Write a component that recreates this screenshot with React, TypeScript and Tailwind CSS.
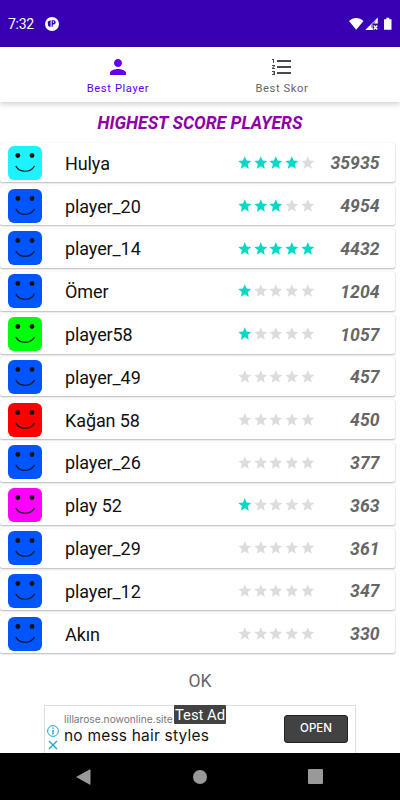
import { MdFormatListNumbered, MdPerson, MdStar } from 'react-icons/md'

interface Player {
  name: string
  color: string
  stars: number
  score: number
}

const players: Player[] = [
  { name: 'Hulya', color: 'text-[#1df3ff]', stars: 4, score: 35935 },
  { name: 'player_20', color: 'text-[#0055ff]', stars: 3, score: 4954 },
  { name: 'player_14', color: 'text-[#0055ff]', stars: 5, score: 4432 },
  { name: 'Ömer', color: 'text-[#0055ff]', stars: 1, score: 1204 },
  { name: 'player58', color: 'text-[#00ff0a]', stars: 1, score: 1057 },
  { name: 'player_49', color: 'text-[#0055ff]', stars: 0, score: 457 },
  { name: 'Kağan 58', color: 'text-[#ff0000]', stars: 0, score: 450 },
  { name: 'player_26', color: 'text-[#0055ff]', stars: 0, score: 377 },
  { name: 'play 52', color: 'text-[#ff00ff]', stars: 1, score: 363 },
  { name: 'player_29', color: 'text-[#0055ff]', stars: 0, score: 361 },
  { name: 'player_12', color: 'text-[#0055ff]', stars: 0, score: 347 },
  { name: 'Akın', color: 'text-[#0055ff]', stars: 0, score: 330 }
]

function StatusBar() {
  return (
    <header className="flex h-[47px] shrink-0 items-center bg-[#3700b3] pl-2 pr-[7px] text-white">
      <span className="text-[14px] leading-5 tracking-[-0.3px]">7:32</span>
      <svg viewBox="0 0 14 14" className="ml-[11px] h-[14px] w-[14px]">
        <circle cx="7" cy="7" r="7" fill="#fff" />
        <path d="M2.800 5Q3 3.600 5.600 3.200v6.600H4.200Q2.800 9 2.800 7z" fill="#3700b3" />
        <path d="M6.600 3.200h2.400a2.200 2.200 0 0 1 0 4.300H7.800v2.300H6.600z" fill="#3700b3" />
        <circle cx="8.400" cy="5" r=".8" fill="#fff" />
      </svg>
      <svg viewBox="0 0 46 16" className="ml-auto h-4 w-[46px]" fill="#fff">
        <path d="M2 5C6 1.100 12.500 1.100 16.500 5L9.200 13.800z" />
        <path d="M30.800 1.500v6h-5v6.500H18.200z" />
        <path d="M25 11.800V8.500l3.500-3.300" fill="none" stroke="#3700b3" strokeWidth=".9" />
        <path d="M26.700 9.500l3.600 4M30.300 9.500l-3.600 4" fill="none" stroke="#fff" strokeWidth="1.300" />
        <path d="M37 3.200h2.300V1.700h3v1.500h2.200v10.600H37z" />
      </svg>
    </header>
  )
}

function Tabs() {
  return (
    <nav className="z-10 flex h-[55px] shrink-0 justify-center bg-white shadow-[0_2px_6px_rgba(0,0,0,0.2)]">
      <button className="flex w-[164px] flex-col items-center pt-2 text-[#6200ee]">
        <MdPerson className="h-6 w-6" />
        <span className="pt-px text-[11.200px] leading-[18px] tracking-[0.6px]">Best Player</span>
      </button>
      <button className="flex w-[164px] flex-col items-center pt-2 text-[#666]">
        <MdFormatListNumbered className="h-6 w-6 text-[#4a4a4a]" />
        <span className="pt-px text-[11.200px] leading-[18px] tracking-[0.6px]">Best Skor</span>
      </button>
    </nav>
  )
}

function Face({ color }: { color: string }) {
  return (
    <svg viewBox="0 0 34 34" className={`h-[34px] w-[34px] shrink-0 ${color}`}>
      <rect width="34" height="34" rx="6" fill="currentColor" />
      <circle cx="9.800" cy="9.500" r="2.400" fill="#101010" />
      <circle cx="24" cy="9.500" r="2.400" fill="#101010" />
      <path d="M7.800 20C11.500 27 22.500 27 26.500 20" fill="none" stroke="#101010" strokeWidth="1.200" />
    </svg>
  )
}

function PlayerRow({ player }: { player: Player }) {
  return (
    <li className="mr-[5px] flex h-[39px] items-center rounded-[2px] bg-white pl-2 pr-[15.500px] shadow-[0_1px_2px_rgba(0,0,0,0.28),0_0_1px_rgba(0,0,0,0.15)]">
      <Face color={player.color} />
      <span className="ml-[23px] w-[172.300px] pt-px text-[18px] tracking-[-0.1px] text-[#111]">{player.name}</span>
      <span className="flex">
        {[1, 2, 3, 4, 5].map((n) => (
          <MdStar key={n} className={`h-[15.6px] w-[15.6px] ${n <= player.stars ? 'text-[#03dac5]' : 'text-[#dcdcdc]'}`} />
        ))}
      </span>
      <span className="ml-auto pt-[1.500px] text-[17.600px] font-bold italic text-[#666]">{player.score}</span>
    </li>
  )
}

function AdBanner() {
  return (
    <div className="relative mx-auto flex h-[48px] w-[312px] shrink-0 border border-b-0 border-[#dfdfdf] bg-white">
      <div className="flex w-[19px] flex-col items-start pl-[2px] pt-[19px]">
        <svg viewBox="0 0 12 12" className="h-3 w-3" fill="none" stroke="#19a5cf">
          <circle cx="6" cy="6" r="5.400" />
          <path d="M6 5v4.500M6 2.400v1.300" strokeWidth="1.400" />
        </svg>
        <svg viewBox="0 0 12 12" className="mt-[2px] h-3 w-3" fill="none" stroke="#19a5cf" strokeWidth="1.300">
          <path d="M2 2l8 8M10 2l-8 8" />
        </svg>
      </div>
      <div className="flex flex-col whitespace-nowrap pt-[6px] font-[Inter,sans-serif]">
        <span className="text-[10.200px] leading-[15px] text-[#777]">lillarose.nowonline.site</span>
        <span className="text-[15.500px] leading-[18px] tracking-[0.200px] text-[#151515]">no mess hair styles</span>
      </div>
      <button className="absolute right-[7px] top-[9px] h-7 w-16 rounded-[3px] border border-[#222] bg-[#424242] font-[Inter,sans-serif] text-[11.500px] font-medium text-white">
        OPEN
      </button>
      <span className="absolute left-[129px] top-[-1px] flex h-[19px] w-[52px] items-center justify-center whitespace-nowrap rounded-[1px] bg-[#424242] pt-[2px] text-[14.800px] text-white">
        Test Ad
      </span>
    </div>
  )
}

export default function App() {
  return (
    <div className="flex h-[800px] w-[400px] flex-col overflow-hidden bg-white font-[Roboto,sans-serif]">
      <StatusBar />
      <Tabs />
      <main className="flex flex-col bg-white">
        <h1 className="h-[41.400px] pt-[11px] text-center text-[17.500px] font-bold italic leading-5 text-[#8e00a8]">
          HIGHEST SCORE PLAYERS
        </h1>
        <ul className="flex flex-col gap-[3.800px]">
          {players.map((player) => (
            <PlayerRow key={player.name} player={player} />
          ))}
        </ul>
        <button className="mb-[13.600px] mt-[18px] h-5 text-[17.500px] leading-5 text-[#666]">OK</button>
      </main>
      <AdBanner />
      <footer className="mt-auto flex h-[47px] shrink-0 items-center justify-between bg-black pl-[76px] pr-[77px]">
        <svg viewBox="0 0 16 16" className="h-4 w-4">
          <path d="M0 8L13.500 .5q1-.5 1 .5v14q0 1-1 .5z" fill="#999" />
        </svg>
        <span className="h-[14px] w-[14px] rounded-full bg-[#999]" />
        <span className="h-[15px] w-[15px] rounded-[1px] bg-[#999]" />
      </footer>
    </div>
  )
}
